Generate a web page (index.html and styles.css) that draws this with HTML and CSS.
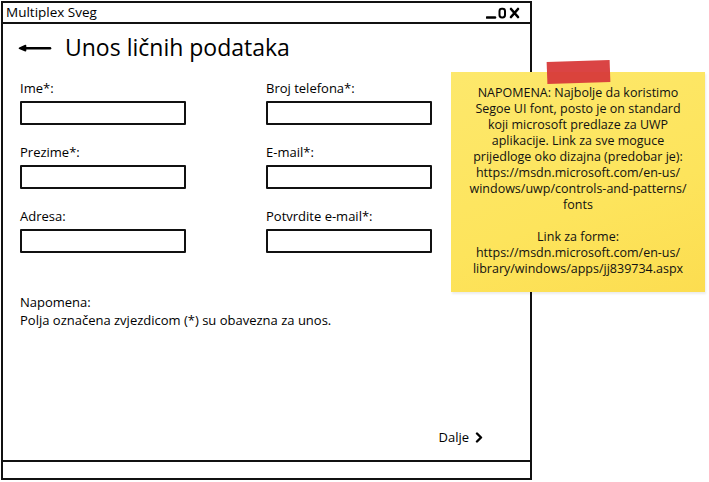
FILE: index.html
```html
<!DOCTYPE html>
<html lang="sr">
<head>
<meta charset="utf-8">
<title>Multiplex Sveg</title>
<link rel="stylesheet" href="styles.css">
</head>
<body>
<div class="window">
  <div class="titlebar">
    <span class="title">Multiplex Sveg</span>
    <svg class="controls" width="38" height="12" viewBox="0 0 38 12">
      <path d="M1 10.5 H9" stroke="#000" stroke-width="2.6" stroke-linecap="round"/>
      <rect x="13.5" y="1.8" width="5.5" height="8.6" rx="2.4" fill="none" stroke="#000" stroke-width="2"/>
      <path d="M25 2 L32 10 M32 2 L25 10" stroke="#000" stroke-width="2.6" stroke-linecap="round"/>
    </svg>
  </div>
  <div class="main">
    <div class="header">
      <svg class="back" width="34" height="10" viewBox="0 0 34 10">
        <path d="M6 5.2 H32" stroke="#000" stroke-width="2.6" stroke-linecap="round"/>
        <path d="M1.5 5.2 L7.5 2.6 L7.5 7.8 Z" fill="#000" stroke="#000" stroke-width="1.6" stroke-linejoin="round"/>
      </svg>
      <h1 class="heading">Unos ličnih podataka</h1>
    </div>
    <div class="form">
      <div class="field"><label class="label">Ime*:</label><div class="input"></div></div>
      <div class="field"><label class="label">Broj telefona*:</label><div class="input"></div></div>
      <div class="field"><label class="label">Prezime*:</label><div class="input"></div></div>
      <div class="field"><label class="label">E-mail*:</label><div class="input"></div></div>
      <div class="field"><label class="label">Adresa:</label><div class="input"></div></div>
      <div class="field"><label class="label">Potvrdite e-mail*:</label><div class="input"></div></div>
    </div>
    <p class="remark">Napomena:<br>Polja označena zvjezdicom (*) su obavezna za unos.</p>
    <div class="footer">
      <span class="next">Dalje</span>
      <svg class="chev" width="8" height="11" viewBox="0 0 8 11">
        <path d="M2 1.5 L6 5.5 L2 9.5" fill="none" stroke="#000" stroke-width="2.4" stroke-linecap="round" stroke-linejoin="round"/>
      </svg>
    </div>
  </div>
  <div class="statusbar"></div>
</div>
<div class="note">
  <div class="tape"></div>
  <p class="note-text">NAPOMENA: Najbolje da koristimo<br>Segoe UI font, posto je on standard<br>koji microsoft predlaze za UWP<br>aplikacije. Link za sve moguce<br>prijedloge oko dizajna (predobar je):<br>https://msdn.microsoft.com/en-us/<br>windows/uwp/controls-and-patterns/<br>fonts</p>
  <p class="note-text">Link za forme:<br>https://msdn.microsoft.com/en-us/<br>library/windows/apps/jj839734.aspx</p>
</div>
</body>
</html>
```

FILE: styles.css
```css
* { box-sizing: border-box; }
html, body { margin: 0; padding: 0; background: #fff; }
body {
  width: 709px;
  height: 482px;
  position: relative;
  overflow: hidden;
  font-family: "Open Sans", "Liberation Sans", sans-serif;
  color: #000;
}
.window {
  margin: 1px 0 0 1px;
  width: 531px;
  height: 479px;
  border: 2px solid #111;
  display: flex;
  flex-direction: column;
}
.titlebar {
  height: 21px;
  border-bottom: 2px solid #111;
  display: flex;
  align-items: center;
  justify-content: space-between;
  padding: 0 6px 0 3px;
}
.title { font-size: 13.5px; line-height: 19px; }
.controls { display: block; margin-top: 1px; }
.main {
  flex: 1;
  display: flex;
  flex-direction: column;
  padding: 9px 0 0 15px;
}
.header { display: flex; align-items: center; height: 28px; gap: 13px; }
.back { display: block; margin-top: 2px; }
.heading { margin: 0; font-weight: 400; font-size: 23px; line-height: 28px; }
.form {
  display: grid;
  grid-template-columns: 166px 166px;
  column-gap: 80px;
  row-gap: 19px;
  margin: 19px 0 0 2px;
}
.field { display: flex; flex-direction: column; gap: 5px; }
.label { font-size: 13px; line-height: 16px; }
.input { height: 24px; border: 2px solid #111; border-radius: 1px; background: #fff; }
.remark { margin: 40px 0 0 2px; font-size: 13px; line-height: 18px; }
.footer {
  margin-top: auto;
  margin-bottom: 14px;
  align-self: flex-end;
  margin-right: 47px;
  display: flex;
  align-items: center;
  gap: 6px;
  height: 18px;
}
.next { font-size: 13px; line-height: 18px; }
.chev { display: block; }
.statusbar { height: 18px; border-top: 2px solid #111; }
.note {
  position: absolute;
  left: 451px;
  top: 72px;
  width: 254px;
  height: 220px;
  background: linear-gradient(160deg, #fde86c 0%, #fde45c 60%, #fcdd50 100%);
  box-shadow: 1px 2px 2px rgba(0, 0, 0, 0.08);
  padding-top: 13px;
}
.tape {
  position: absolute;
  left: 96px;
  top: -11px;
  width: 63px;
  height: 22px;
  background: #d83a3a;
  transform: rotate(-2deg);
  opacity: 0.95;
}
.note-text {
  margin: 0 0 16px;
  text-align: center;
  font-size: 12.5px;
  line-height: 16px;
  color: #111;
}
```
